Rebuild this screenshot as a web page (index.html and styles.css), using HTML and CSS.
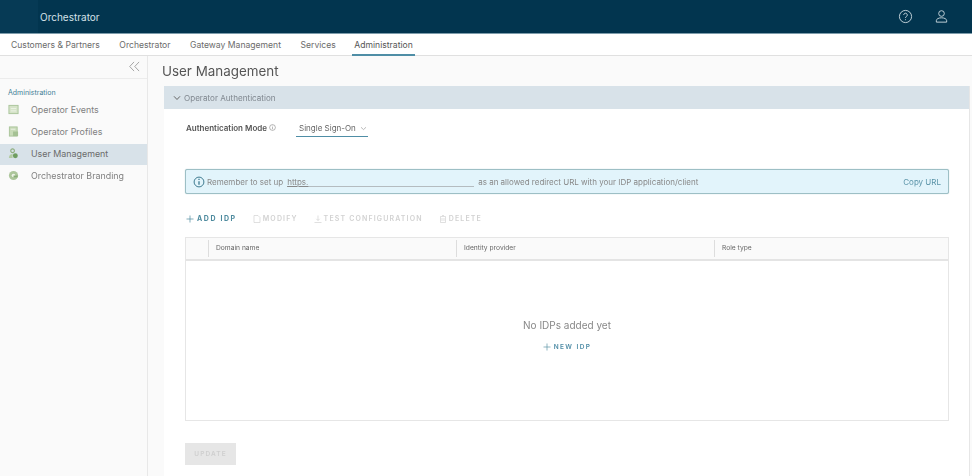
FILE: index.html
```html
<!DOCTYPE html>
<html lang="en">
<head>
<meta charset="utf-8">
<title>Orchestrator</title>
<link rel="stylesheet" href="styles.css">
</head>
<body>
<div class="app">
  <header class="topbar">
    <div class="logo-box"></div>
    <div class="brand">Orchestrator</div>
    <div class="top-icons">
      <svg class="top-icon" viewBox="0 0 16 16"><circle cx="8" cy="8" r="6.500"/><path d="M6.100 6.400a1.900 1.900 0 1 1 2.900 1.600c-.7.400-1 .8-1 1.500"/><path d="M8 11v.9"/></svg>
      <svg class="top-icon" viewBox="0 0 16 16"><circle cx="8" cy="4.800" r="3"/><path d="M2.500 14v-1.600c0-1.800 2.400-3 5.500-3s5.500 1.200 5.500 3V14z"/></svg>
    </div>
  </header>
  <nav class="tabs">
    <span class="tab">Customers &amp; Partners</span>
    <span class="tab">Orchestrator</span>
    <span class="tab">Gateway Management</span>
    <span class="tab">Services</span>
    <span class="tab tab-active">Administration</span>
  </nav>
  <div class="body-row">
    <aside class="sidebar">
      <div class="collapse-row">
        <svg class="collapse" viewBox="0 0 12 12"><path d="M5.500 1 .8 6l4.700 5M11 1 6.300 6l4.700 5"/></svg>
      </div>
      <div class="side-head">Administration</div>
      <div class="side-item">
        <svg class="side-icon" viewBox="0 0 12 12"><rect x="1" y="1.500" width="10" height="9" fill="#d5e3c8" stroke="#a9c49a"/><path d="M3 5h6M3 7.500h6" stroke="#eef3e8"/></svg>
        <span>Operator Events</span>
      </div>
      <div class="side-item">
        <svg class="side-icon" viewBox="0 0 12 12"><rect x="1.500" y="1" width="8.500" height="10" fill="#c8dbb8" stroke="#a9c49a"/><rect x="5.500" y="6" width="5.500" height="5" fill="#a5c194"/><path d="M3 3.500h5" stroke="#eef3e8"/></svg>
        <span>Operator Profiles</span>
      </div>
      <div class="side-item side-active">
        <svg class="side-icon" viewBox="0 0 12 12"><circle cx="5" cy="3" r="2" fill="none" stroke="#8fae7e" stroke-width="1.200"/><path d="M1 11c0-3 1.500-4.500 4-4.500V11z" fill="#b2cba1"/><circle cx="8" cy="8.500" r="2.700" fill="#6f9d60"/></svg>
        <span>User Management</span>
      </div>
      <div class="side-item">
        <svg class="side-icon" viewBox="0 0 12 12"><circle cx="6" cy="6" r="5" fill="#adc69b"/><circle cx="6" cy="6" r="2" fill="#eef3e8"/><path d="M6 6h4.500v2H6z" fill="#88ac76"/></svg>
        <span>Orchestrator Branding</span>
      </div>
    </aside>
    <main class="main">
      <h1 class="title">User Management</h1>
      <section class="panel">
        <div class="panel-head">
          <svg class="chev" viewBox="0 0 8 6"><path d="M1 1.300 4 4.500l3-3.200"/></svg>
          <span>Operator Authentication</span>
        </div>
        <div class="panel-body">
          <div class="mode-row">
            <span class="mode-label">Authentication Mode</span>
            <svg class="mode-info" viewBox="0 0 8 8"><circle cx="4" cy="4" r="3.300"/><path d="M4 3.500v2.500M4 2v.8"/></svg>
            <span class="mode-select">Single Sign-On
              <svg class="mode-chev" viewBox="0 0 8 6"><path d="M1 1.500 4 4.300l3-2.800"/></svg>
            </span>
          </div>
          <div class="alert">
            <svg class="alert-icon" viewBox="0 0 12 12"><circle cx="6" cy="6" r="4.900"/><path d="M6 5.300v3.500M6 2.800v1.200" stroke-width="1.300"/></svg>
            <span>Remember to set up</span>
            <span class="link-wrap"><span class="link">https.</span></span>
            <span>as an allowed redirect URL with your IDP application/client</span>
            <span class="copy">Copy URL</span>
          </div>
          <div class="actions">
            <span class="act act-on"><svg class="act-icon" viewBox="0 0 8 8"><path d="M4 .5v7M.5 4h7"/></svg>ADD IDP</span>
            <span class="act act-off"><svg class="act-icon" viewBox="0 0 8 8"><path d="M1 .5h4l2 2v5H1z"/></svg>MODIFY</span>
            <span class="act act-off"><svg class="act-icon" viewBox="0 0 8 8"><path d="M4 .5v5M2.300 3.800 4 5.500l1.700-1.700M.5 7.500h7"/></svg>TEST CONFIGURATION</span>
            <span class="act act-off"><svg class="act-icon" viewBox="0 0 8 8"><path d="M1.500 1.500h5v6h-5zM3 .5h2M3 3v3M5 3v3"/></svg>DELETE</span>
          </div>
          <div class="grid">
            <div class="grid-head">
              <div class="gh gh-check"></div>
              <div class="gh gh-domain">Domain name</div>
              <div class="gh gh-idp">Identity provider</div>
              <div class="gh gh-role">Role type</div>
            </div>
            <div class="grid-empty">
              <div class="empty-text">No IDPs added yet</div>
              <div class="new-idp"><svg class="new-icon" viewBox="0 0 8 8"><path d="M4 .5v7M.5 4h7"/></svg>NEW IDP</div>
            </div>
          </div>
          <button class="update" type="button">UPDATE</button>
        </div>
      </section>
    </main>
  </div>
</div>
</body>
</html>
```

FILE: styles.css
```css
* { box-sizing: border-box; }
html, body { margin: 0; padding: 0; height: 100%; overflow: hidden; }
body { font-family: Inter, "Liberation Sans", sans-serif; color: #666; background: #fafafa; }
.app { width: 972px; height: 476px; display: flex; flex-direction: column; filter: blur(.5px); }

.topbar { height: 34px; flex: none; display: flex; align-items: center; background: #02354f; border-bottom: 1px solid #7d9cab; }
.logo-box { width: 38px; height: 33px; background: #063a55; }
.brand { margin-left: 2px; font-size: 10px; color: #d5e2e8; }
.top-icons { margin-left: auto; margin-right: 23px; display: flex; gap: 21px; }
.top-icon { width: 15px; height: 15px; fill: none; stroke: #c9d6dd; stroke-width: 1; }

.tabs { height: 22px; flex: none; display: flex; gap: 19.500px; padding-left: 11px; background: #fff; border-bottom: 1px solid #e0e0e0; font-size: 8.600px; color: #6b6b6b; }
.tab { height: 22px; line-height: 22px; white-space: nowrap; }
.tab-active { margin-left: -3px; padding: 0 2px; color: #555; border-bottom: 2px solid #4f8ea6; }

.body-row { flex: 1; display: flex; min-height: 0; }
.sidebar { width: 148px; flex: none; background: #fafafa; border-right: 1px solid #e8e8e8; }
.collapse-row { height: 23px; display: flex; justify-content: flex-end; align-items: center; padding: 0 7px 2px 0; border-bottom: 1px solid #ececec; }
.collapse { width: 11px; height: 11px; fill: none; stroke: #888; stroke-width: .8; }
.side-head { margin: 9px 0 2px 8px; height: 10px; font-size: 7px; line-height: 10px; color: #3f7f97; }
.side-item { height: 21.800px; display: flex; align-items: center; padding: 0 0 2px 8px; gap: 12px; font-size: 8.900px; color: #808080; }
.side-active { background: #d8e2e9; color: #6b6b6b; }
.side-icon { width: 11px; height: 11px; flex: none; }

.main { flex: 1; min-width: 0; padding-left: 14px; padding-right: 2px; }
.title { margin: 0; height: 30px; line-height: 31px; font-size: 13.400px; font-weight: 400; color: #555; }
.panel { margin-left: 2px; background: #fff; height: 400px; border-right: 1px solid #e6e6e6; }
.panel-head { height: 23px; background: #d8e2e9; display: flex; align-items: center; padding-left: 9px; gap: 3px; font-size: 8.100px; color: #808890; }
.chev { width: 8px; height: 6px; fill: none; stroke: #666; stroke-width: 1; }
.panel-body { padding: 0 20px 0 21px; }

.mode-row { height: 37px; display: flex; align-items: center; padding-left: 1px; }
.mode-label { font-size: 8px; font-weight: 600; color: #555; white-space: nowrap; }
.mode-info { width: 7px; height: 7px; margin-left: 2px; fill: none; stroke: #888; stroke-width: .7; }
.mode-select { margin-left: 20px; height: 17px; width: 72px; padding: 3px 0 0 3px; font-size: 8px; color: #666; border-bottom: 1px solid #4f8ea6; display: flex; align-items: flex-start; gap: 4px; line-height: 10px; margin-top: 2px; white-space: nowrap; }
.mode-chev { width: 7px; height: 5px; margin-top: 3px; flex: none; fill: none; stroke: #999; stroke-width: .8; }

.alert { margin-top: 23px; height: 25px; display: flex; align-items: center; padding: 0 7px 0 7px; background: #e2f4fb; border: 1px solid #9dbfc5; border-radius: 2px; font-size: 8px; color: #888; box-shadow: 0 0 1px #9dbfc5; white-space: nowrap; }
.alert-icon { width: 12px; height: 12px; margin-right: 2px; fill: none; stroke: #3e7b90; stroke-width: 1; }
.link-wrap { width: 187px; margin: 0 4px; border-bottom: 1px solid #b4bcc0; height: 10px; line-height: 10px; }
.link { text-decoration: underline; color: #888; }
.copy { margin-left: auto; color: #5a93a8; }

.actions { margin-top: 16px; height: 17px; display: flex; align-items: center; gap: 16px; padding-left: 1px; font-size: 7px; letter-spacing: 1.150px; font-weight: 600; white-space: nowrap; }
.act { display: inline-flex; align-items: center; gap: 2px; }
.act-on { color: #4d8a9e; font-weight: 700; letter-spacing: 1.600px; gap: 3px; }
.act-off { color: #d2d2d2; }
.act-icon { width: 8px; height: 8px; fill: none; stroke: currentColor; stroke-width: .7; }

.grid { margin-top: 10px; height: 184px; border: 1px solid #e6e6e6; background: #fff; }
.grid-head { height: 23px; display: flex; align-items: center; background: #fafafa; border-bottom: 2px solid #e4e4e4; font-size: 6.700px; color: #666; }
.gh { height: 17px; line-height: 17px; padding-left: 7px; white-space: nowrap; }
.gh-check { width: 22px; padding: 0; }
.gh-domain { width: 248px; border-left: 1px solid #ddd; }
.gh-idp { width: 258px; border-left: 1px solid #ddd; }
.gh-role { border-left: 1px solid #ddd; flex: 1; }
.grid-empty { height: 159px; display: flex; flex-direction: column; align-items: center; padding-top: 58px; }
.empty-text { font-size: 10px; color: #888; line-height: 13px; }
.new-idp { margin-top: 11px; display: flex; align-items: center; gap: 3px; font-size: 6.500px; font-weight: 600; letter-spacing: 1.400px; color: #4d8ba5; }
.new-icon { width: 8px; height: 8px; fill: none; stroke: #5f95a8; stroke-width: .7; }

.update { display: block; margin-top: 22px; width: 51px; height: 22px; padding: 0; background: #e6e6e6; border: 0; font: 600 6.500px Inter, "Liberation Sans", sans-serif; letter-spacing: 1.100px; color: #cfcfcf; }
```
